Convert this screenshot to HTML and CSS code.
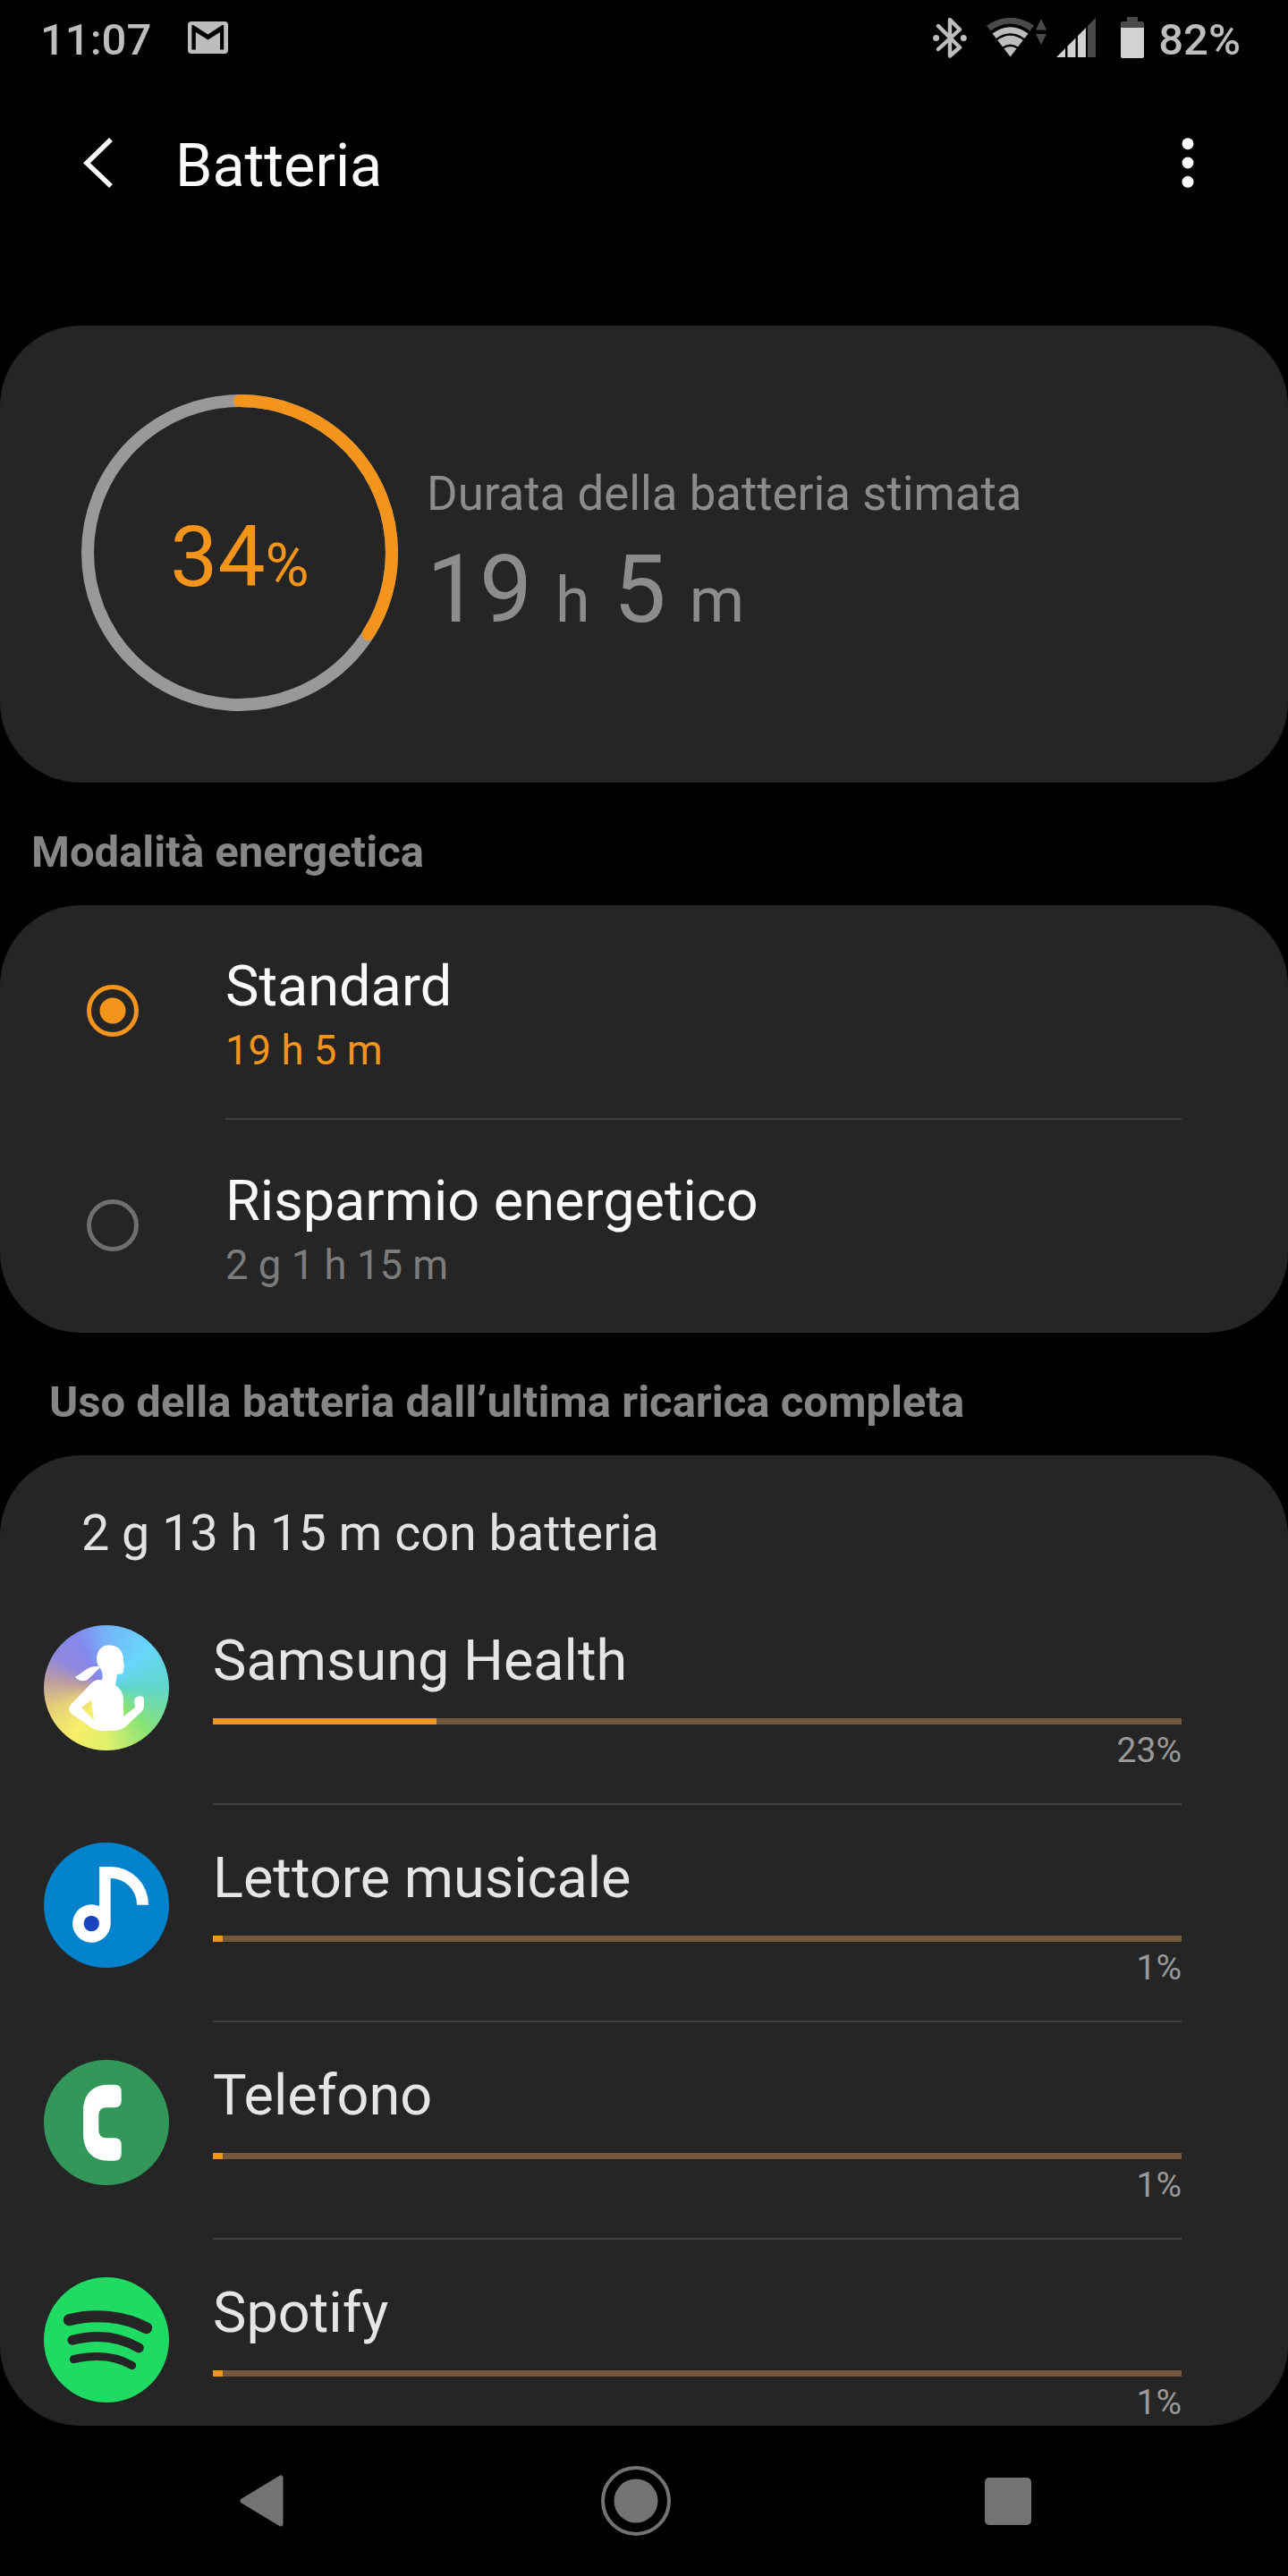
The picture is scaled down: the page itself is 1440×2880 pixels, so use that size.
FILE: index.html
```html
<!DOCTYPE html>
<html lang="it">
<head>
    <meta charset="UTF-8">
    <meta name="viewport" content="width=device-width, initial-scale=1.0">
    <title>Batteria</title>
    <link rel="stylesheet" href="styles.css">
</head>
<body>

<!-- Status bar -->
<div class="status-bar">
    <span class="clock">11:07</span>
    <svg class="gmail" width="45" height="36" viewBox="0 0 45 36">
        <rect width="45" height="36" rx="4" fill="#bdbdbd"/>
        <path d="M4.400 31.500V4H6L22.500 14.500L38.500 4H40.200V31.500H36V12L22.500 20.500L8.800 12V31.500Z" fill="#000"/>
    </svg>
    <div class="status-icons">
        <svg class="bluetooth" width="38" height="46" viewBox="0 0 38 46">
            <path d="M6 10L30 34L19 43.500V3L30 14L6 36" fill="none" stroke="#bdbdbd" stroke-width="4.400" stroke-linejoin="round" stroke-linecap="round"/>
            <circle cx="3.600" cy="23.400" r="3.500" fill="#bdbdbd"/>
            <circle cx="34.300" cy="23.400" r="3.500" fill="#bdbdbd"/>
        </svg>
        <svg class="wifi" width="68" height="44" viewBox="0 0 68 44">
            <path d="M26.500 43.500L0 8.500Q26.500 -9 53 8.500Z" fill="#4a4a4a"/>
            <path d="M26.500 43.500L4.500 14.500Q26.500 -1.500 48.500 14.500Z" fill="#000"/>
            <path d="M26.500 43.500L6.500 17.500Q26.500 3 46.500 17.500Z" fill="#bdbdbd"/>
            <path d="M10.500 24.500Q26.500 12.500 42.500 24.500M17.500 34Q26.500 27.500 35.500 34" fill="none" stroke="#000" stroke-width="2.500"/>
            <path d="M61 1L67 13.500H55ZM55 18H67L61 30Z" fill="#4a4a4a"/>
        </svg>
        <svg class="signal" width="44" height="44" viewBox="0 0 44 44">
            <path d="M0 44L10 34V44ZM12.500 31.500L21.500 22.500V44H12.500ZM24 20L33 11V44H24Z" fill="#d2d2d2"/>
            <path d="M35 9L44 0V44H35Z" fill="#4a4a4a"/>
        </svg>
        <svg class="battery" width="26" height="46" viewBox="0 0 26 46">
            <path d="M0 12V7Q0 5 2 5H7V0H19V5H24Q26 5 26 7V12Z" fill="#4a4a4a"/>
            <path d="M0 12H26V44Q26 46 24 46H2Q0 46 0 44Z" fill="#d2d2d2"/>
        </svg>
        <span>82%</span>
    </div>
</div>

<!-- Header -->
<div class="header">
    <svg class="back" width="34" height="56" viewBox="0 0 34 56">
        <path d="M31 2L4 28.300L31 54" fill="none" stroke="#fafafa" stroke-width="5.500"/>
    </svg>
    <h1>Batteria</h1>
    <svg class="more" width="14" height="56" viewBox="0 0 14 56" fill="#fafafa">
        <circle cx="7" cy="6.700" r="6.500"/>
        <circle cx="7" cy="28" r="6.500"/>
        <circle cx="7" cy="49.300" r="6.500"/>
    </svg>
</div>

<!-- Charge level -->
<div class="card level-card">
    <div class="ring">
        <svg width="354" height="354" viewBox="0 0 354 354" fill="none" stroke-width="14">
            <circle cx="177" cy="177" r="170" stroke="#999"/>
            <circle cx="177" cy="177" r="170" stroke="#f3951c" stroke-linecap="round" pathLength="100" stroke-dasharray="34 66" transform="rotate(-90 177 177)"/>
        </svg>
        <div class="ring-value">34<small>%</small></div>
    </div>
    <div class="estimate">
        <div class="estimate-label">Durata della batteria stimata</div>
        <div class="estimate-time">19 <small>h</small> 5 <small>m</small></div>
    </div>
</div>

<!-- Power mode -->
<h2>Modalità energetica</h2>
<div class="card">
    <div class="mode">
        <span class="radio checked"></span>
        <div class="mode-body">
            <div class="mode-name">Standard</div>
            <div class="mode-time active">19 h 5 m</div>
        </div>
    </div>
    <div class="mode">
        <span class="radio"></span>
        <div class="mode-body">
            <div class="mode-name">Risparmio energetico</div>
            <div class="mode-time">2 g 1 h 15 m</div>
        </div>
    </div>
</div>

<!-- Usage list -->
<h2 class="indent">Uso della batteria dall’ultima ricarica completa</h2>
<div class="card usage-card">
    <div class="usage-total">2 g 13 h 15 m con batteria</div>

    <div class="app">
        <svg class="app-icon health" viewBox="0 0 140 140">
            <path fill="#fff" fill-rule="evenodd" d="M63 48C56 41 58 22 73.500 22.300C84 22.500 89.500 30 89 40L90 45L88.500 53Q88 55 85 54.500L82 55L80 67Q89 73 89 83V102L102 92L101 84C102 79 112 77 112 83V91Q112 94 109 97L95 110Q88 118 77 118H63Q56 117 51 113L31 99Q26 95 30 89L53 65Q57 61 61 61H65Q67 54 63 48ZM53 84L42 92L56 106Z"/>
            <path fill="#fff" d="M62 46C49 45 45 52 35 58C40 64 48 63 51 59L64 46Z"/>
        </svg>
        <div class="app-body">
            <div class="app-name">Samsung Health</div>
            <div class="bar"><div class="bar-fill" style="width: 23.1%"></div></div>
            <div class="percent">23%</div>
        </div>
    </div>

    <div class="app">
        <svg class="app-icon music" viewBox="0 0 140 140">
            <path fill="#fff" d="M62 27H74.700A42.300 42.300 0 0 1 117 69.700H104A29.300 29.300 0 0 0 74.700 40V90.500A21.300 21.300 0 1 1 62 71Z"/>
            <circle cx="53.300" cy="90.500" r="8.700" fill="#1a44bd"/>
        </svg>
        <div class="app-body">
            <div class="app-name">Lettore musicale</div>
            <div class="bar"><div class="bar-fill" style="width: 1%"></div></div>
            <div class="percent">1%</div>
        </div>
    </div>

    <div class="app">
        <svg class="app-icon phone" viewBox="0 0 140 140">
            <path fill="#fff" d="M72 27.700H79Q86.700 27.700 86.700 35V46Q86.700 53.300 79 53.300H70Q61.300 53.300 61.300 62V78Q61.300 87.300 70 87.300H79Q86.700 87.300 86.700 95V105Q86.700 112.700 79 112.700H72C54 112.700 44 101 44 82V58C44 39 54 27.700 72 27.700Z"/>
        </svg>
        <div class="app-body">
            <div class="app-name">Telefono</div>
            <div class="bar"><div class="bar-fill" style="width: 1%"></div></div>
            <div class="percent">1%</div>
        </div>
    </div>

    <div class="app">
        <svg class="app-icon spotify" viewBox="0 0 140 140" fill="none" stroke="#252525" stroke-linecap="round">
            <path stroke-width="13" d="M28.300 47.700C57 40 90 43.500 114.700 56.700"/>
            <path stroke-width="11" d="M32 70.300C58 63.500 84 66 106.300 79"/>
            <path stroke-width="9" d="M33.300 91.700C58 86 79 87 98.700 98.700"/>
        </svg>
        <div class="app-body">
            <div class="app-name">Spotify</div>
            <div class="bar"><div class="bar-fill" style="width: 1%"></div></div>
            <div class="percent">1%</div>
        </div>
    </div>
</div>

<!-- Navigation bar -->
<div class="nav-bar">
    <svg width="50" height="58" viewBox="0 0 50 58">
        <path d="M46 3V55L3 29Z" fill="#737373" stroke="#737373" stroke-width="5" stroke-linejoin="round"/>
    </svg>
    <svg class="home" width="78" height="78" viewBox="0 0 78 78">
        <circle cx="39" cy="39" r="37" fill="none" stroke="#737373" stroke-width="4"/>
        <circle cx="39" cy="39" r="24.500" fill="#737373"/>
    </svg>
    <svg width="52" height="53" viewBox="0 0 52 53">
        <rect width="52" height="53" rx="5" fill="#737373"/>
    </svg>
</div>

</body>
</html>
```

FILE: styles.css
```css
/* General Styles */
* {
    box-sizing: border-box;
}

body {
    font-family: Roboto, "Liberation Sans", sans-serif;
    margin: 0;
    width: 1440px;
    height: 2880px;
    overflow: hidden;
    background-color: #000;
    color: #fafafa;
}

svg {
    display: block;
    flex-shrink: 0;
}

/* Status bar */
.status-bar {
    display: flex;
    align-items: center;
    height: 88px;
    padding: 0 53px 0 45px;
    font-size: 49px;
    font-weight: 500;
    color: #bdbdbd;
}

.gmail {
    margin: 0 0 4px 41px;
}

.status-icons {
    display: flex;
    align-items: center;
    margin-left: auto;
}

.status-icons svg {
    margin-bottom: 4px;
}

.wifi {
    margin-left: 22px;
}

.signal {
    margin-left: 10px;
}

.battery {
    margin: 0 16px 0 28px;
}

/* Header */
.header {
    display: flex;
    align-items: center;
    height: 194px;
    margin-bottom: 82px;
    padding: 0 105px 0 93px;
}

h1 {
    margin: 0 0 0 69px;
    font-size: 66.5px;
    font-weight: 400;
}

.back,
.more {
    margin-bottom: 6px;
}

.more {
    margin-left: auto;
}

/* Cards */
.card {
    background-color: #252525;
    border-radius: 90px;
    overflow: hidden;
}

h2 {
    height: 137px;
    margin: 0;
    padding: 54px 0 0 35px;
    font-size: 49px;
    line-height: 48px;
    font-weight: 700;
    color: #868686;
}

h2.indent {
    padding-left: 55px;
}

/* Charge level */
.level-card {
    display: flex;
    align-items: center;
    height: 511px;
    padding: 0 91px 3px;
}

.ring {
    display: grid;
    place-items: center;
}

.ring > * {
    grid-area: 1 / 1;
}

.ring-value {
    padding-top: 9px;
    font-size: 94.5px;
    line-height: 100px;
    color: #f3951c;
}

.ring-value small {
    font-size: 67px;
    line-height: 1;
}

.estimate {
    margin-left: 32px;
    color: #8c8c8c;
}

.estimate-label {
    font-size: 52.8px;
    line-height: 64px;
}

.estimate-time {
    margin-top: 20px;
    font-size: 105px;
    line-height: 112px;
}

.estimate-time small {
    font-size: 70px;
    line-height: 1;
}

/* Power mode */
.mode {
    display: flex;
    height: 238px;
    padding: 0 119px 0 97px;
}

.radio {
    width: 58px;
    height: 58px;
    margin: 89px 97px 0 0;
    border: 5px solid #6f6f6f;
    border-radius: 50%;
}

.radio.checked {
    border-color: #f3951c;
    background: radial-gradient(circle, #f3951c 14px, transparent 15px);
}

.mode-body {
    flex: 1;
    padding-top: 55px;
}

.mode:first-child {
    height: 240px;
}

.mode:first-child .mode-body {
    border-bottom: 2px solid #3f3f3f;
}

.mode-name {
    font-size: 63px;
    line-height: 72px;
}

.mode-time {
    margin-top: 8px;
    font-size: 45.5px;
    line-height: 56px;
    color: #7c7c7c;
}

.mode-time.active {
    color: #f3951c;
}

/* Usage list */
.usage-card {
    height: 1085px;
}

.usage-total {
    height: 148px;
    padding: 55px 91px 0;
    font-size: 55.7px;
    line-height: 64px;
    color: #e2e2e2;
}

.app {
    display: flex;
    height: 243px;
    padding: 0 119px 0 49px;
}

.app-icon {
    width: 140px;
    height: 140px;
    margin: 42px 49px 0 0;
    border-radius: 50%;
}

.health {
    background: conic-gradient(#74b4f8, #68d6fb 45deg, #5fd6cb 90deg, #88e276 135deg, #dff06c 180deg, #f8ee6a 215deg, #e6d078 250deg, #c0a09c 275deg, #9288dc 300deg, #8488ee 330deg, #74b4f8);
}

.music {
    background-color: #0082cd;
}

.phone {
    background-color: #329759;
}

.spotify {
    background-color: #1fda63;
}

.app-body {
    flex: 1;
    padding-top: 46px;
    border-bottom: 2px solid #3f3f3f;
}

.app-name {
    font-size: 63px;
    line-height: 72px;
    color: #e5e5e5;
}

.bar {
    height: 7px;
    margin-top: 28px;
    background-color: #73583d;
}

.bar-fill {
    height: 100%;
    background-color: #f3951c;
}

.percent {
    margin-top: 5px;
    font-size: 39px;
    line-height: 48px;
    text-align: right;
    color: #999;
}

/* Navigation bar */
.nav-bar {
    display: flex;
    justify-content: space-between;
    align-items: center;
    height: 168px;
    padding: 0 287px 0 268px;
}

.home {
    margin-left: 3px;
}
```
